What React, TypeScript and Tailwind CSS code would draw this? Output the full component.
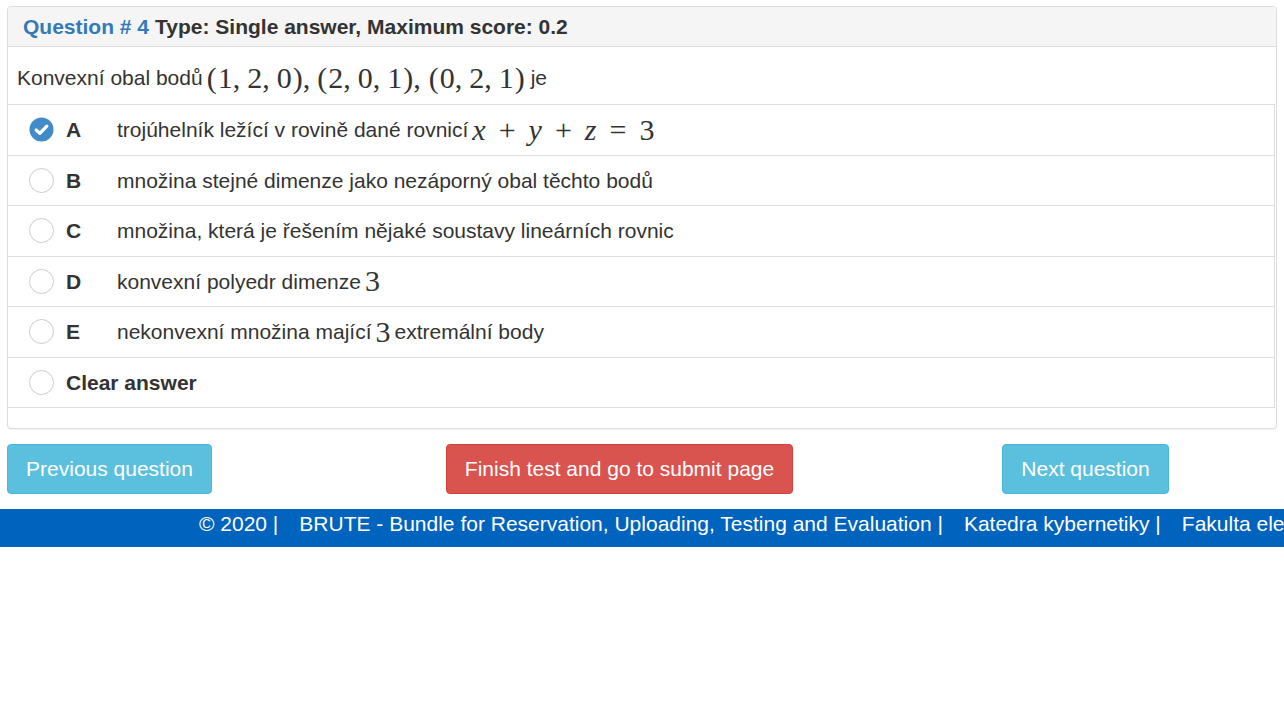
import React from "react"

const sans = { fontFamily: '"Liberation Sans", Arial, sans-serif' }

function M({ children }: { children: React.ReactNode }) {
    return (
        <span className="mx-[4px] text-[30px] leading-none whitespace-nowrap" style={{ fontFamily: '"Liberation Serif", "Times New Roman", serif' }}>
            {children}
        </span>
    )
}

function V({ children }: { children: React.ReactNode }) {
    return <span className="italic">{children}</span>
}

function Op({ children }: { children: React.ReactNode }) {
    return <span className="px-[13px]">{children}</span>
}

function Radio({ checked }: { checked?: boolean }) {
    if (checked) {
        return (
            <svg width="25" height="25" viewBox="0 0 26 26" className="shrink-0">
                <circle cx="13" cy="13" r="12.5" fill="#428bca" />
                <path d="M7.5 13.5 L11.2 17 L18.5 9.5" fill="none" stroke="#fff" strokeWidth="3.4" strokeLinecap="round" strokeLinejoin="round" />
            </svg>
        )
    }
    return <span className="block h-[25px] w-[25px] shrink-0 rounded-full border border-[#ccc] bg-white" />
}

const tuple = (a: string, b: string, c: string) => (
    <>
        (<span className="ml-[1px]">{a}</span>,<span className="ml-[7px]">{b}</span>,<span className="ml-[7px] mr-[1px]">{c}</span>)
    </>
)

export default function App() {
    const options: { letter: string; checked?: boolean; body: React.ReactNode }[] = [
        {
            letter: "A",
            checked: true,
            body: (
                <>
                    trojúhelník ležící v rovině dané rovnicí
                    <M>
                        <V>x</V>
                        <Op>+</Op>
                        <V>y</V>
                        <Op>+</Op>
                        <V>z</V>
                        <Op>=</Op>3
                    </M>
                </>
            ),
        },
        { letter: "B", body: <>množina stejné dimenze jako nezáporný obal těchto bodů</> },
        { letter: "C", body: <>množina, která je řešením nějaké soustavy lineárních rovnic</> },
        {
            letter: "D",
            body: (
                <>
                    konvexní polyedr dimenze<M>3</M>
                </>
            ),
        },
        {
            letter: "E",
            body: (
                <>
                    nekonvexní množina mající<M>3</M>extremální body
                </>
            ),
        },
    ]

    return (
        <div className="w-[1284px] h-[704px] bg-white text-[#333] text-[21px]" style={sans}>
            <div className="pt-[6px] px-[7px]">
                <div className="rounded-[4px] border border-[#ddd] bg-white shadow-[0_1px_1px_rgba(0,0,0,0.05)] overflow-hidden">
                    <div className="h-[40px] flex items-center pl-[15px] bg-[#f5f5f5] border-b border-[#ddd] font-bold">
                        <span className="text-[#337ab7]">Question # 4</span>
                        <span className="ml-[6px]">Type: Single answer, Maximum score: 0.2</span>
                    </div>
                    <div className="h-[57px] flex items-center pl-[9px] pt-[4px]">
                        Konvexní obal bodů
                        <M>
                            {tuple("1", "2", "0")},<span className="ml-[7px]">{tuple("2", "0", "1")}</span>,
                            <span className="ml-[8px]">{tuple("0", "2", "1")}</span>
                        </M>
                        <span className="ml-[2px]">je</span>
                    </div>
                    <div className="mr-[1px] border-r border-b border-[#ddd]">
                        {options.map((o) => (
                            <div key={o.letter} className="h-[50.5px] border-t border-[#ddd] flex items-center pl-[21px]">
                                <Radio checked={o.checked} />
                                <span className="ml-[12px] w-[51px] font-bold">{o.letter}</span>
                                <span className="flex items-center whitespace-nowrap">{o.body}</span>
                            </div>
                        ))}
                        <div className="h-[50.5px] border-t border-[#ddd] flex items-center pl-[21px]">
                            <Radio />
                            <span className="ml-[12px] font-bold">Clear answer</span>
                        </div>
                    </div>
                    <div className="h-[20px]" />
                </div>
            </div>

            <div className="flex mt-[15px] px-[7px]">
                <button className="h-[50px] w-[205px] rounded-[4px] border border-[#46b8da] bg-[#5bc0de] text-white">
                    Previous question
                </button>
                <button className="ml-[234px] h-[50px] w-[347px] rounded-[4px] border border-[#d43f3a] bg-[#d9534f] text-white">
                    Finish test and go to submit page
                </button>
                <button className="ml-[209px] h-[50px] w-[167px] rounded-[4px] border border-[#46b8da] bg-[#5bc0de] text-white">
                    Next question
                </button>
            </div>

            <div className="mt-[15px] h-[38px] bg-[#0063be] text-white flex items-center pb-[8px] pl-[199px] whitespace-nowrap overflow-hidden">
                <span>© 2020 |</span>
                <span className="ml-[21px]">BRUTE - Bundle for Reservation, Uploading, Testing and Evaluation |</span>
                <span className="ml-[21px]">Katedra kybernetiky |</span>
                <span className="ml-[21px]">Fakulta elektrotechnická |</span>
                <span className="ml-[21px]">ČVUT v Praze</span>
            </div>
        </div>
    )
}
